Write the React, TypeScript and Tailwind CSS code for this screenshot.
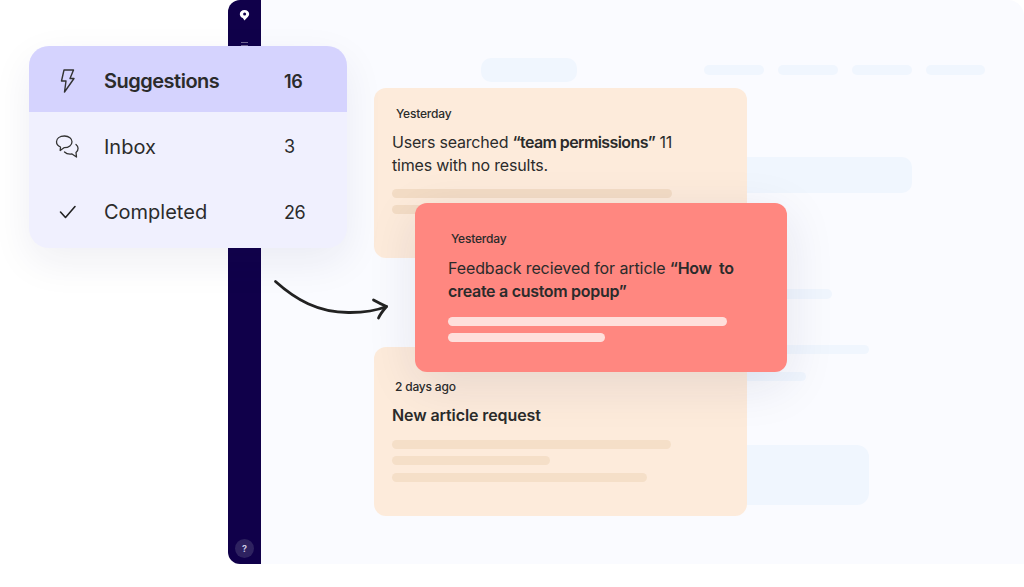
import React from "react";

const font = { fontFamily: '"Inter", "Liberation Sans", sans-serif' };

function Bar({ className }: { className: string }) {
  return <div className={`h-[9px] rounded-full ${className}`} />;
}

function Bolt() {
  return (
    <svg width="24" height="26" viewBox="0 0 24 26" fill="none" stroke="#333" strokeWidth="1.4" strokeLinejoin="round">
      <path d="M8 2 H17.5 L14 10.5 H18 L8.5 24 L10 13 H5.5 Z" />
    </svg>
  );
}

function Chat() {
  return (
    <svg width="26" height="26" viewBox="0 0 26 26" fill="none" stroke="#333" strokeWidth="1.3" strokeLinecap="round" strokeLinejoin="round">
      <path d="M9.5 2 C4.5 2 1.5 4.5 1.5 7.8 C1.5 10.5 3.5 12.3 5.5 13 L5.2 16.5 L9 13.7 C14 13.8 17 11 17 7.8 C17 4.5 14 2 9.5 2 Z" />
      <path d="M21 10.5 C23.5 12.5 24 16 21 18.5 L21.5 23 L17 20 C13.5 20.5 11 19.5 9.5 18" />
    </svg>
  );
}

function Check() {
  return (
    <svg width="20" height="16" viewBox="0 0 20 16" fill="none" stroke="#222" strokeWidth="1.6" strokeLinecap="round" strokeLinejoin="round">
      <path d="M2.5 8 L7.5 13.5 L17 2.5" />
    </svg>
  );
}

function MenuRow({
  icon,
  label,
  count,
  active,
}: {
  icon: React.ReactNode;
  label: string;
  count: string;
  active?: boolean;
}) {
  return (
    <div className={`flex h-[65.5px] items-center pt-[5px] text-[20px] text-[#2b2b2b] ${active ? "bg-[#d5d3fe] font-semibold" : ""}`}>
      <div className="ml-[25px] mr-[22px] flex w-[28px] justify-center">{icon}</div>
      <span className={`w-[180px] ${active ? "tracking-[-0.5px]" : ""}`}>{label}</span>
      <span className="text-[18px] tracking-[-0.4px]">{count}</span>
    </div>
  );
}

export default function App() {
  return (
    <div className="relative h-[587px] w-[1024px] overflow-hidden bg-white" style={font}>
      <div className="flex h-[564px] pl-[228px]">
        {/* Sidebar */}
        <aside className="flex w-[33px] shrink-0 flex-col items-center justify-between rounded-l-[12px] bg-[#10004a] pb-[6px] pt-[9px]">
          <div className="flex flex-col items-center gap-[21px]">
            <svg width="11" height="12" viewBox="0 0 11 12">
              <path d="M5.5 1 C8.3 1 10.2 2.8 10.2 5 C10.2 7.2 8 8.6 5.5 11.5 L3.8 9 C2 8.4 0.8 6.9 0.8 5 C0.8 2.8 2.7 1 5.5 1 Z" fill="#fff" />
              <circle cx="5.6" cy="5" r="1.5" fill="#10004a" />
            </svg>
            <div className="flex flex-col gap-[2px] opacity-40">
              <div className="h-px w-[7px] bg-white" />
              <div className="h-px w-[7px] bg-white" />
              <div className="h-px w-[7px] bg-white" />
            </div>
          </div>
          <div className="flex h-[19px] w-[19px] items-center justify-center rounded-full bg-[#2e2260] text-[9px] font-bold text-[#c9c6e0]">
            ?
          </div>
        </aside>

        {/* Main panel: decorative skeleton and cards share one grid cell */}
        <main className="grid flex-1 rounded-tr-[16px] bg-[#fafbff]">
          <div className="col-start-1 row-start-1 flex flex-col pt-[58px]">
            <div className="flex items-center">
              <div className="ml-[220px] h-[24px] w-[96px] rounded-[10px] bg-[#f0f6fe]" />
              <div className="ml-[127px] flex gap-[14px]">
                <div className="h-[10px] w-[60px] rounded-full bg-[#f0f6fe]" />
                <div className="h-[10px] w-[60px] rounded-full bg-[#f0f6fe]" />
                <div className="h-[10px] w-[60px] rounded-full bg-[#f0f6fe]" />
                <div className="h-[10px] w-[59px] rounded-full bg-[#f0f6fe]" />
              </div>
            </div>
            <div className="ml-[439px] mt-[75px] h-[36px] w-[212px] rounded-[10px] bg-[#f0f6fe]" />
            <div className="ml-[439px] mt-[96px] h-[10px] w-[132px] rounded-full bg-[#f0f6fe]" />
            <div className="ml-[439px] mt-[46px] h-[9px] w-[169px] rounded-full bg-[#f0f6fe]" />
            <div className="ml-[439px] mt-[18px] h-[9px] w-[106px] rounded-full bg-[#f0f6fe]" />
            <div className="ml-[439px] mt-[64px] h-[60px] w-[169px] rounded-[12px] bg-[#f0f6fe]" />
          </div>

          <div className="col-start-1 row-start-1 ml-[113px] flex flex-col gap-[89px] pt-[88px] text-[#2b2b2b]">
            <section className="h-[170px] w-[373px] rounded-[12px] bg-[#fdebdb] pl-[18px] pt-[18px]">
              <p className="ml-[4px] text-[12px] font-medium leading-[16px] tracking-[-0.2px]">Yesterday</p>
              <p className="mt-[9px] w-[290px] text-[16px] leading-[23px] tracking-[-0.2px]">
                Users searched <span className="font-semibold tracking-[-0.6px]">“team permissions”</span> 11 times with no results.
              </p>
              <Bar className="mt-[12px] w-[280px] bg-[#f3dcc5]" />
              <Bar className="mt-[7px] w-[160px] bg-[#f3dcc5]" />
            </section>

            <section className="h-[169px] w-[373px] rounded-[12px] bg-[#fdebdb] pl-[18px] pt-[32px]">
              <p className="ml-[3px] text-[12px] font-medium leading-[16px] tracking-[-0.2px]">2 days ago</p>
              <p className="mt-[9px] text-[16px] font-semibold leading-[23px] tracking-[-0.1px]">New article request</p>
              <Bar className="mt-[13px] w-[279px] bg-[#f5dfc8]" />
              <Bar className="mt-[7px] w-[158px] bg-[#f5dfc8]" />
              <Bar className="mt-[8px] w-[255px] bg-[#f5dfc8]" />
            </section>
          </div>
        </main>
      </div>

      {/* Floating red card */}
      <section className="absolute left-[415px] top-[203px] h-[169px] w-[372px] rounded-[12px] bg-[#ff8780] pl-[33px] pt-[28px] text-[#2b2b2b] shadow-[0_12px_50px_rgba(30,30,80,0.10)]">
        <p className="ml-[3px] text-[12px] font-medium leading-[16px] tracking-[-0.2px]">Yesterday</p>
        <p className="mt-[10px] w-[300px] text-[16px] leading-[23px] tracking-[-0.1px]">
          Feedback recieved for article <span className="font-semibold tracking-[-0.3px]">“How&nbsp; to create a custom popup”</span>
        </p>
        <Bar className="mt-[14px] w-[279px] bg-[#ffdfdb]" />
        <Bar className="mt-[7px] w-[157px] bg-[#ffdfdb]" />
      </section>

      {/* Arrow */}
      <svg className="absolute left-[270px] top-[275px]" width="125" height="50" viewBox="0 0 125 50" fill="none" stroke="#222" strokeWidth="2.8" strokeLinecap="round" strokeLinejoin="round">
        <path d="M5.5 6.5 C25 24 48 38 80 37.5 C95 37.5 108 35 116.5 31.5" />
        <path d="M103.5 25 C108 27.5 112 29.5 116.5 31.5 C113.5 35 110.5 38.5 108.5 43" />
      </svg>

      {/* Floating menu */}
      <nav className="absolute left-[29px] top-[46px] h-[202px] w-[318px] overflow-hidden rounded-[20px] bg-[#f0f0fe] shadow-[0_14px_40px_rgba(30,30,80,0.07)]">
        <MenuRow icon={<Bolt />} label="Suggestions" count="16" active />
        <MenuRow icon={<Chat />} label="Inbox" count="3" />
        <MenuRow icon={<Check />} label="Completed" count="26" />
      </nav>
    </div>
  );
}
